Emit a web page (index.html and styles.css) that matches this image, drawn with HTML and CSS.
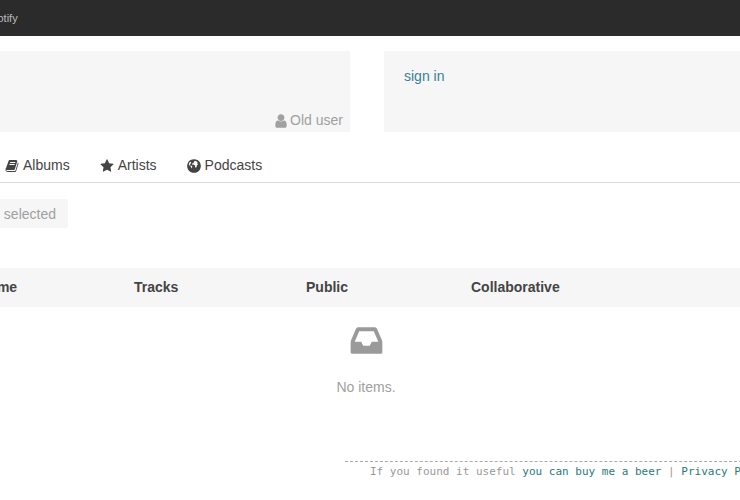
FILE: index.html
```html
<!DOCTYPE html>
<html lang="en">
<head>
<meta charset="utf-8">
<title>Spotify</title>
<link rel="stylesheet" href="styles.css">
</head>
<body>
<div class="page">
  <header class="topbar"><span class="brand">Spotify</span></header>
  <section class="panels">
    <div class="panel panel-user">
      <span class="user-line">
        <svg class="icon icon-user" viewBox="0 0 1792 1792"><path d="M1536 1399q0 109-62.5 187t-150.5 78h-854q-88 0-150.5-78t-62.5-187q0-85 8.5-160.5t31.5-152 58.5-131 94-89 134.5-34.5q131 128 313 128t313-128q76 0 134.5 34.5t94 89 58.5 131 31.5 152 8.5 160.5zm-256-887q0 159-112.5 271.5t-271.5 112.5-271.5-112.5-112.5-271.5 112.5-271.5 271.5-112.5 271.5 112.5 112.5 271.5z"/></svg>
        Old user
      </span>
    </div>
    <div class="panel panel-sign"><a class="link" href="#">sign in</a></div>
  </section>
  <nav class="tabs">
    <a class="tab" href="#">
      <svg class="icon" viewBox="0 0 1792 1792"><path d="M1703 478q40 57 18 129l-275 906q-19 64-76.5 107.5t-122.5 43.5h-923q-77 0-148.5-53.5t-99.5-131.5q-24-67-2-127 0-4 3-27t4-37q1-8-3-21.5t-3-19.5q2-11 8-21t16.5-23.5 16.5-23.5q23-38 45-91.5t30-91.5q3-10 .5-30t-.5-28q3-11 17-28t17-23q21-36 42-92t25-90q1-9-2.5-32t.5-28q4-13 22-30.5t22-22.5q19-26 42.5-84.5t27.5-96.5q1-8-3-25.5t-2-26.5q2-8 9-18t18-23 17-21q8-12 16.5-30.5t15-35 16-36 19.5-32 26.5-23.5 36-11.5 47.5 5.5l-1 3q38-9 51-9h761q74 0 114 56t18 130l-274 906q-36 119-71.5 153.5t-128.5 34.5h-869q-27 0-38 15-11 16-1 43 24 70 144 70h923q29 0 56-15.5t35-41.5l300-987q7-22 5-57 38 15 59 43zm-1064 2q-4 13 2 22.5t20 9.5h608q13 0 25.5-9.5t16.5-22.5l21-64q4-13-2-22.5t-20-9.5h-608q-13 0-25.5 9.5t-16.5 22.5zm-83 256q-4 13 2 22.5t20 9.5h608q13 0 25.5-9.5t16.5-22.5l21-64q4-13-2-22.5t-20-9.5h-608q-13 0-25.5 9.5t-16.5 22.5z"/></svg>
      Albums
    </a>
    <a class="tab" href="#">
      <svg class="icon" viewBox="0 0 1792 1792"><path d="M1728 647q0 22-26 48l-363 354 86 500q1 7 1 20 0 21-10.5 35.5t-30.5 14.5q-19 0-40-12l-449-236-449 236q-22 12-40 12-21 0-31.5-14.5t-10.5-35.5q0-6 2-20l86-500-364-354q-25-27-25-48 0-37 56-46l502-73 225-455q19-41 49-41t49 41l225 455 502 73q56 9 56 46z"/></svg>
      Artists
    </a>
    <a class="tab" href="#">
      <svg class="icon icon-globe" viewBox="0 0 1792 1792"><path fill-rule="evenodd" d="M896 128q209 0 385.5 103t279.5 279.5 103 385.5-103 385.5-279.5 279.5-385.5 103-385.5-103-279.5-279.5-103-385.5 103-385.5 279.5-279.5 385.5-103zM1000 330l-90 50-60 90 40 70-70 50-130 20-30 70 60 80 130-20 90 70 90 40-20 110 60 70-20 100 90-70 60-110 40-100-50-60 90-20 60-70-110-140 90-40-90-110-130-80zM480 430l-120 130-50 170 90 120 110 60 40 110 70 110 60 40-10-120 40-90-80-80-130-20-70-90 60-120 70-60 20-90-40-60z"/></svg>
      Podcasts
    </a>
  </nav>
  <div class="actions"><button class="btn" type="button">selected</button></div>
  <section class="table">
    <div class="thead">
      <span class="col-name">Name</span>
      <span>Tracks</span>
      <span>Public</span>
      <span>Collaborative</span>
    </div>
    <div class="empty">
      <svg class="empty-icon" viewBox="0 0 1792 1792"><path d="M1151 960h316q-1-3-2.5-8t-2.5-8l-212-496h-708l-212 496q-1 2-2.5 8t-2.5 8h316l95 192h320zm513 30v482q0 26-19 45t-45 19h-1408q-26 0-45-19t-19-45v-482q0-62 25-123l238-552q10-25 36.5-42t52.5-17h832q26 0 52.5 17t36.5 42l238 552q25 61 25 123z"/></svg>
      <p class="empty-text">No items.</p>
    </div>
  </section>
  <footer class="footer">If you found it useful <a class="foot-link" href="#">you can buy me a beer</a> | <a class="foot-link" href="#">Privacy Policy</a></footer>
</div>
</body>
</html>
```
FILE: styles.css
```css
html, body {
  margin: 0;
  padding: 0;
  height: 500px;
  overflow: hidden;
  background: #fff;
}
body {
  font-family: "Liberation Sans", Arial, sans-serif;
  font-size: 14px;
  color: #444;
}
.page {
  width: 792px;
  margin-left: -30px;
}
.topbar {
  height: 36px;
  background: #2b2b2b;
  display: flex;
  align-items: center;
  padding-left: 14px;
}
.brand {
  font-size: 11px;
  color: #bbb;
}
.panels {
  display: flex;
  gap: 34px;
  margin-top: 15px;
  height: 81px;
}
.panel {
  background: #f6f6f6;
  box-sizing: border-box;
}
.panel-user {
  width: 380px;
  display: flex;
  justify-content: flex-end;
  align-items: flex-end;
  padding: 0 7px 3px 0;
  color: #a0a0a0;
}
.user-line {
  display: inline-flex;
  align-items: center;
  gap: 1px;
  line-height: 17px;
}
.panel-sign {
  flex: 1;
  padding: 17px 20px;
  line-height: 17px;
}
.link {
  color: #3a7f98;
  text-decoration: none;
}
.icon {
  width: 14px;
  height: 14px;
  fill: currentColor;
  flex: none;
}
.icon-user {
  width: 16px;
  height: 16px;
}
.icon-globe {
  width: 16px;
  height: 16px;
  margin: 0 -1px;
}
.tabs {
  display: flex;
  gap: 30px;
  margin-top: 16px;
  padding: 9px 0 8px 35px;
  border-bottom: 1px solid #ddd;
  line-height: 17px;
}
.tab {
  display: inline-flex;
  align-items: center;
  gap: 4px;
  color: #444;
  text-decoration: none;
}
.actions {
  margin-top: 16px;
}
.btn {
  display: block;
  width: 98px;
  height: 29px;
  padding: 0 12px 0 0;
  border: 0;
  border-radius: 3px;
  background: #f6f6f6;
  color: #a0a0a0;
  font: inherit;
  text-align: right;
}
.table {
  margin-top: 40px;
}
.thead {
  display: grid;
  grid-template-columns: 164px 172px 165px 1fr;
  align-items: center;
  height: 39px;
  padding-bottom: 2px;
  background: #f6f6f6;
  font-weight: bold;
  box-sizing: border-box;
}
.col-name {
  padding-left: 9px;
}
.empty {
  display: flex;
  flex-direction: column;
  align-items: center;
  padding-top: 15px;
  color: #9a9a9a;
}
.empty-icon {
  width: 37px;
  height: 37px;
  fill: currentColor;
}
.empty-text {
  margin: 20px 0 0;
  line-height: 17px;
  color: #a0a0a0;
}
.footer {
  margin: 65px 0 0 375px;
  padding: 2px 0 0 25px;
  border-top: 1px dashed #aaa;
  font-family: "DejaVu Sans Mono", monospace;
  font-size: 11px;
  line-height: 15px;
  color: #999;
  white-space: nowrap;
}
.foot-link {
  color: #2a7a7a;
  text-decoration: none;
}
```
